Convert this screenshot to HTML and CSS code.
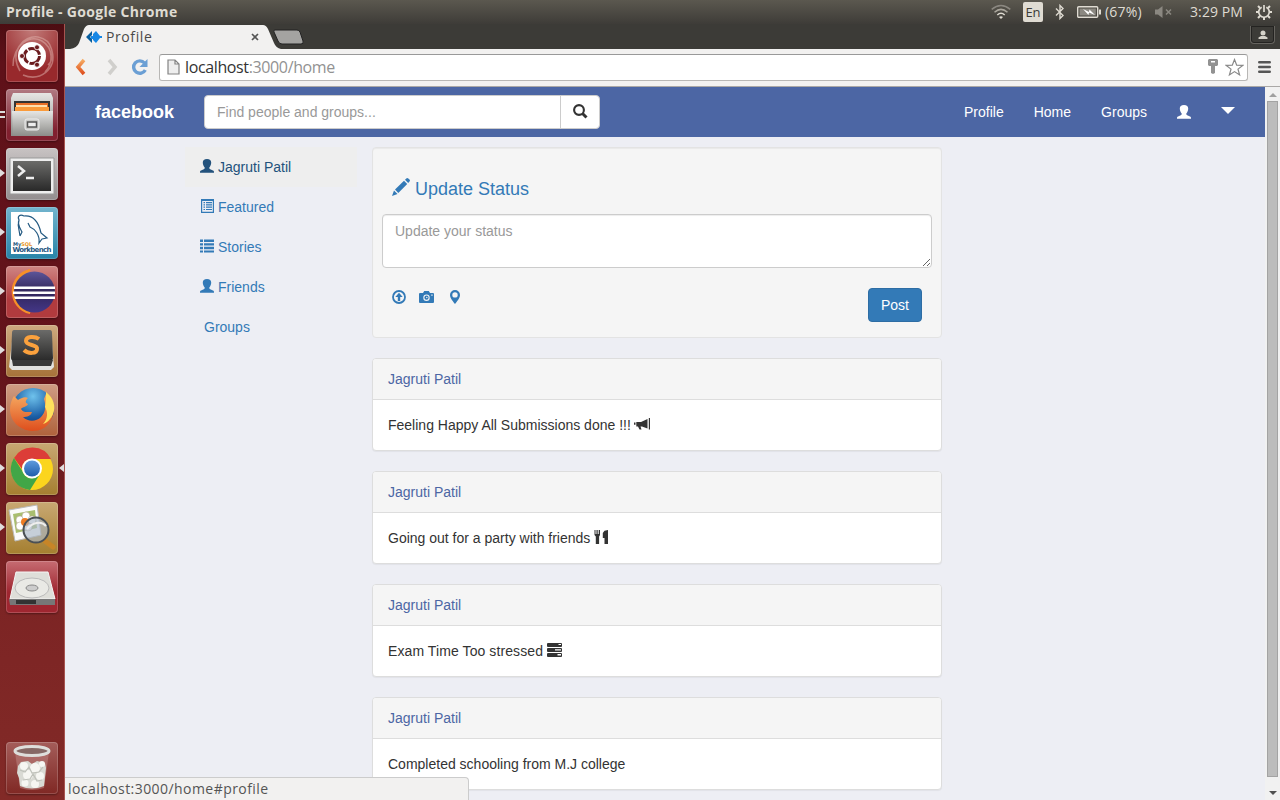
FILE: index.html
```html
<!DOCTYPE html>
<html lang="en">
<head>
<meta charset="utf-8">
<title>Profile</title>
<link rel="stylesheet" href="styles.css">
</head>
<body>
<svg class="defs" width="0" height="0">
  <defs>
    <linearGradient id="metal" x1="0" y1="0" x2="0" y2="1"><stop offset="0" stop-color="#e6e6e4"/><stop offset="1" stop-color="#8c8c89"/></linearGradient>
    <linearGradient id="dark" x1="0" y1="0" x2="0" y2="1"><stop offset="0" stop-color="#6b6b69"/><stop offset="1" stop-color="#292929"/></linearGradient>
    <linearGradient id="orange" x1="0" y1="0" x2="0" y2="1"><stop offset="0" stop-color="#f6ab62"/><stop offset="1" stop-color="#de4e1d"/></linearGradient>
    <linearGradient id="indigo" x1="0" y1="0" x2="0" y2="1"><stop offset="0" stop-color="#5c5599"/><stop offset=".5" stop-color="#302559"/><stop offset="1" stop-color="#443788"/></linearGradient>
    <radialGradient id="globe" cx=".5" cy=".2" r=".8"><stop offset="0" stop-color="#6fc2ec"/><stop offset=".6" stop-color="#1b5ea5"/><stop offset="1" stop-color="#102c63"/></radialGradient>
    <linearGradient id="blue" x1="0" y1="0" x2="0" y2="1"><stop offset="0" stop-color="#5f9bdd"/><stop offset="1" stop-color="#1f5dab"/></linearGradient>
    <symbol id="user" viewBox="0 0 14 14"><path d="M7 0C4.200 0 2.800 1.200 2.800 3.600c0 2.200.8 3.700 1.900 4.800v.7c0 .6-.3.900-.9 1.200L1 11.500C.2 11.900 0 12.300 0 13v.8h14V13c0-.7-.2-1.100-1-1.500l-2.800-1.200c-.6-.3-.9-.6-.9-1.200v-.7c1.100-1.100 1.900-2.600 1.900-4.800C11.200 1.200 9.800 0 7 0z"/></symbol>
  </defs>
</svg>
<div class="desktop">
  <header class="topbar">
    <span class="window-title">Profile - Google Chrome</span>
    <div class="indicators">
      <svg class="wifi" width="20" height="16" viewBox="0 0 20 16" fill="none" stroke-width="1.500"><path stroke="#8b8881" d="M.7 5.300Q10-2.200 19.300 5.300"/><path stroke="#aaa69d" d="M3.500 8.200Q10 2.500 16.500 8.200"/><path stroke="#dfdbd2" d="M6.300 11Q10 7.600 13.700 11"/><path fill="#dfdbd2" d="M8 13Q10 11.500 12 13L10 15z"/></svg>
      <span class="lang">En</span>
      <svg class="bt" width="10" height="16" viewBox="0 0 10 16" fill="none" stroke="#dfdbd2" stroke-width="1.400"><path d="M1 4.500l7 7L5 14.500v-13l3 3-7 7"/></svg>
      <svg class="battery" width="24" height="12" viewBox="0 0 24 12"><rect x=".7" y=".7" width="20" height="10.600" rx="1" fill="none" stroke="#dfdbd2" stroke-width="1.400"/><path fill="#dfdbd2" d="M22 3.500h2v5h-2z"/><path fill="#8b8881" d="M2.500 2.500h16.300v7H2.500z"/><path fill="#fff" d="M6 3l6 3 .5-2.500L18 9l-6-2.500-.5 2.500z"/></svg>
      <span class="percent">(67%)</span>
      <svg class="sound" width="18" height="12" viewBox="0 0 18 12" fill="#8b8881"><path d="M0 3.500h3L7.500 0v12L3 8.500H0z"/><path d="M11 3.500l5 5m0-5l-5 5" stroke="#8b8881" stroke-width="1.500"/></svg>
      <span class="clock">3:29 PM</span>
      <svg class="gear" width="16" height="16" viewBox="0 0 16 16" fill="none" stroke="#dfdbd2"><path stroke-width="1.700" d="M5.700 3.200a5.300 5.300 0 1 0 4.600 0M8 1v7"/><path stroke-width="2" d="M0 8h3m10 0h3M8 13v3M2 2l2 2M14 2l-2 2M2 14l2-2M14 14l-2-2"/></svg>
    </div>
  </header>
  <div class="workspace">
    <nav class="launcher">
      <div class="tile t-dash"><svg viewBox="0 0 52 52"><g fill="none" stroke="#e2b5b0" opacity=".5" stroke-width="1.500"><path d="M7 36C7 15 24 4 36 11c12 7 11 23 3 31M14 41C3 22 17 5 32 7c16 3 17 21 10 28M17 45c17 7 34-6 29-24"/></g><circle cx="26" cy="26" r="14" fill="#fff"/><circle cx="26" cy="26" r="7.500" fill="none" stroke="#6b1b1e" stroke-width="3" stroke-dasharray="14.200 1.500"/><g fill="#6b1b1e" stroke="#fff" stroke-width=".8"><circle cx="16" cy="26" r="2.500"/><circle cx="31" cy="17.300" r="2.500"/><circle cx="31" cy="34.700" r="2.500"/></g></svg></div>
      <div class="tile t-files"><svg viewBox="0 0 52 52"><path d="M7 4h38l2 5v38H5V9z" fill="url(#metal)"/><path d="M8 12h36v12H8z" fill="#343433"/><path d="M10 14h32v9H10z" fill="#e96f26"/><path d="M10 16h31v5H10z" fill="#ffe0ae"/><path d="M9 18h34v4H9z" fill="#fa9b3b"/><path d="M6 22h41l-1 25H7z" fill="url(#metal)"/><rect x="19" y="30" width="14" height="11" rx="2" fill="#c9c9c7" stroke="#eee"/><path d="M21.500 33h9v5h-9z" fill="#eee" stroke="#555" stroke-width="1.500"/></svg><i class="pip"></i><i class="pip pip-low"></i></div>
      <div class="tile t-term"><svg viewBox="0 0 52 52"><path d="M4 10h44v36H4z" fill="#eee" stroke="#999"/><path d="M7 13h38v30H7z" fill="url(#dark)"/><path d="M12 18l6 5-6 5M20 30h8" fill="none" stroke="#eee" stroke-width="2.500"/></svg><i class="arrow"></i></div>
      <div class="tile t-mysql"><svg viewBox="0 0 52 52"><rect x="5" y="5" width="42" height="42" fill="#fff"/><path d="M14 29l2-4c-2-4-5-8-3-12-2-4 1-6 5-4 10-1 15 8 17 17l6 5-5 1-3 4c1-8-4-14-9-16l-2-4M14 29l-1-6c-1-4-1-7 0-10" fill="none" stroke="#245a82" stroke-width="1.200"/><text x="7" y="39" class="mini">My<tspan fill="#e99725">SQL</tspan></text><text x="6.500" y="45" class="mini wb" textLength="39">Workbench</text></svg><i class="arrow"></i></div>
      <div class="tile t-eclipse"><svg viewBox="0 0 52 52"><path d="M24 4a22 22 0 0 0 0 43A25 25 0 0 1 24 4" fill="#f79028" stroke="#f79028" stroke-width="2"/><circle cx="28.500" cy="26" r="20.500" fill="url(#indigo)"/><path d="M8 20.500h41v2.500H8zm-1 5h42v2.500H7zm1 5h41V33H9z" fill="#fff"/></svg><i class="arrow"></i></div>
      <div class="tile t-sublime"><svg viewBox="0 0 52 52"><path d="M7 8h38l3 34-3 3H6l-3-3z" fill="#e2e2df"/><path d="M8 5h36q2 0 2 3l1 25q0 3-3 3H9q-4 0-4-3L6 8q0-3 2-3" fill="url(#dark)"/><path d="M6 35h41l-2 6H7z" fill="#393938"/><path d="M33 14c-4-3-13-3-13 2s12 3 11 8c0 5-9 5-13 1" fill="none" stroke="#fba13d" stroke-width="4"/></svg><i class="arrow"></i></div>
      <div class="tile t-firefox"><svg viewBox="0 0 52 52"><circle cx="27" cy="25" r="21" fill="url(#globe)"/><path d="M40 10c8 7 9 17 6 24-4 10-12 13-20 13C13 46 4 37 4 25c0-5 2-10 4-13l4 4c3-2 7-4 10-2-3 3-3 5 0 6-1 3-6 3-7 5 2 4 6 3 11 3-1 4-5 5-9 5 5 5 13 5 18 0 5-5 5-12 3-18z" fill="url(#orange)"/><path d="M40 8c8 6 10 15 7 22-2 5-6 9-10 10 5-5 5-12 2-17 1-5 1-9 1-15" fill="#ffe05c"/></svg><i class="arrow"></i></div>
      <div class="tile t-chrome"><svg viewBox="0 0 52 52"><circle cx="26" cy="26" r="21" fill="#fbd51d"/><path d="M8 15a21 21 0 0 1 37 1H26c-6 0-10 4-10 10z" fill="#dc3d38"/><path d="M8 15a21 21 0 0 0 16 32l10-16c-5 7-15 5-17-2z" fill="#41a647"/><circle cx="26" cy="25.500" r="10" fill="#fff"/><circle cx="26" cy="25.500" r="8" fill="url(#blue)"/></svg><i class="arrow"></i><i class="arrow arrow-active"></i></div>
      <div class="tile t-image"><svg viewBox="0 0 52 52"><path d="M3 8l28-5 4 30-26 6z" fill="#fafafa" stroke="#bbb"/><path d="M7 12l22-4 2 18-21 5z" fill="#a9be70"/><g fill="#fff" stroke="#aa9985" stroke-width=".5"><circle cx="14" cy="18" r="4"/><circle cx="20" cy="14" r="4"/><circle cx="26" cy="18" r="4"/><circle cx="22" cy="25" r="4"/><circle cx="14" cy="24" r="4"/></g><circle cx="19" cy="20" r="4" fill="#ed7b22"/><path d="M39 39l8 6" stroke="#c78527" stroke-width="5" stroke-linecap="round"/><circle cx="30" cy="28" r="12.500" fill="#abb9c7" fill-opacity=".65" stroke="#4a5055" stroke-width="2"/><path d="M21 27c5-6 14-9 19-3" fill="none" stroke="#eee" stroke-width="2"/></svg><i class="arrow"></i></div>
      <div class="tile t-disk"><svg viewBox="0 0 52 52"><path d="M10 11h32l7 27H4z" fill="#deded9" stroke="#f5f5f5"/><ellipse cx="26" cy="27" rx="17" ry="10" fill="#e9e9e5" stroke="#bbb"/><ellipse cx="26" cy="27" rx="6" ry="3" fill="#ccc" stroke="#888"/><path d="M3 38h46v6H4z" fill="#777"/><path d="M10 39h20v4H10z" fill="#333"/></svg></div>
      <div class="tile t-trash"><svg viewBox="0 0 52 52"><path d="M9 10h34l-5 36q-12 4-24 0z" fill="#bd8582" opacity=".55"/><path d="M12 24l3-4 7-1 4 3 5-3 8 2 1 5-1 9-1 9q-12 5-24 0l-1-8-2-5z" fill="#d9dad4"/><g fill="#f6f6f2"><circle cx="18" cy="24" r="4"/><circle cx="29" cy="26" r="5"/><circle cx="36" cy="22" r="3"/><circle cx="22" cy="33" r="5"/><circle cx="34" cy="34" r="4"/><circle cx="19" cy="41" r="3.500"/><circle cx="29" cy="42" r="4"/></g><path d="M14 28l5 2 4-5 3 6 7-1 4-5M17 38l7-1 3-5 4 7 5-1" fill="none" stroke="#bfc1ba" stroke-width="1.200"/><ellipse cx="26" cy="9" rx="17" ry="4.500" fill="#866865" stroke="#dededb" stroke-width="3"/></svg></div>
    </nav>
    <section class="browser">
      <div class="tabstrip">
        <svg class="tab-shape" width="260" height="25" viewBox="0 0 260 25"><path d="M0 25Q7 24 9 19L14 5Q16 1 19 1H193Q196 1 198 5L204 19Q206 24 211 25z" fill="#f2f1f0"/><path d="M205 6H227Q229 6 230 8L233 17Q234 20 231 20H212Q209 20 208 17L204 8Q203 6 205 6" fill="#a4a3a1" stroke="#222"/></svg>
        <div class="tab-content">
          <svg width="16" height="12" viewBox="0 0 16 12"><path d="M6 0v4L4 6l2 2v4L0 6z" fill="#075e9e"/><path d="M7 3l3-3 4 5h2v2h-2l-4 5-3-3V8H5V5h2z" fill="#1687e5"/></svg>
          <span class="tab-title">Profile</span>
          <svg class="close" width="8" height="8" viewBox="0 0 8 8"><path d="M1 1l6 6m0-6L1 7" stroke="#555" stroke-width="1.700"/></svg>
        </div>
        <div class="profile-btn"><svg width="10" height="10" viewBox="0 0 10 10" fill="#d5d2c9"><circle cx="5" cy="3" r="2.500"/><path d="M.5 9V7.500L3 6h4l2.500 1.500V9z"/></svg></div>
      </div>
      <div class="toolbar">
        <svg class="back" width="12" height="18" viewBox="0 0 12 18"><path d="M9 2L3 9l6 7" fill="none" stroke="url(#orange)" stroke-width="3.500"/></svg>
        <svg class="fwd" width="12" height="18" viewBox="0 0 12 18"><path d="M3 2l6 7-6 7" fill="none" stroke="#d0cfcc" stroke-width="3.500"/></svg>
        <svg class="reload" width="18" height="18" viewBox="0 0 18 18"><path d="M14.300 12a6.200 6.200 0 1 1-.8-7" fill="none" stroke="#6b9fd4" stroke-width="3.400"/><path d="M16.500 1v8h-8z" fill="#6b9fd4"/></svg>
        <div class="omnibox">
          <svg width="13" height="16" viewBox="0 0 13 16"><path d="M1 1h7l4 4v10H1zM8 1v4h4" fill="#eee" stroke="#838383" stroke-width="1.200"/></svg>
          <span class="url">localhost<span class="path">:3000/home</span></span>
          <svg class="key" width="10" height="16" viewBox="0 0 10 16"><path fill="#929292" fill-rule="evenodd" d="M1 0h8l1 1v5L9 7H7v7l-2 1-2-1V7H1L0 6V1zm2 2v1.500h4V2z"/></svg>
          <svg class="star" width="19" height="19" viewBox="0 0 19 19"><path d="M9.500 1.500l2.200 5.600 6 .3-4.700 3.700 1.600 5.800-5.100-3.300-5.100 3.300L6 11.100 1.300 7.400l6-.3z" fill="#fff" stroke="#888" stroke-width="1.200"/></svg>
        </div>
        <svg class="menu" width="13" height="14" viewBox="0 0 13 14"><path d="M1.300 2.300h10.400M1.300 7h10.400M1.300 11.700h10.400" stroke="#555" stroke-width="2.600" stroke-linecap="round"/></svg>
      </div>
      <div class="viewport">
        <div class="page">
          <header class="navbar">
            <a class="brand">facebook</a>
            <div class="search"><span class="search-input">Find people and groups...</span><span class="search-btn"><svg width="15" height="15" viewBox="0 0 15 15" fill="none" stroke="#333"><circle cx="6" cy="6" r="4.900" stroke-width="2.100"/><path d="M9.500 9.500l4 4" stroke-width="3"/></svg></span></div>
            <div class="nav-links"><a>Profile</a><a>Home</a><a>Groups</a><a><svg class="icon nav-user"><use href="#user"/></svg></a><a class="caret-link"><i class="caret"></i></a></div>
          </header>
          <div class="columns">
            <nav class="sidebar">
              <a class="active"><svg class="icon"><use href="#user"/></svg>Jagruti Patil</a>
              <a><svg class="icon" viewBox="0 0 14 14"><path d="M1.600.6h11.800v12.800H1.600z" fill="none" stroke="currentColor" stroke-width="1.200"/><path d="M3.500 3H5v1.200H3.500zM6 3h6v1.200H6zM3.500 5.300H5v1.200H3.500zm2.500 0h6v1.200H6zM3.500 7.600H5v1.200H3.500zm2.500 0h6v1.200H6zM3.500 9.900H5v1.200H3.500zm2.500 0h6v1.200H6z"/><path d="M1 0h13v2H1z"/></svg>Featured</a>
              <a><svg class="icon" viewBox="0 0 14 14"><path d="M0 .6h3v2.400H0zm4 0h10v2.400H4zM0 4.200h3v2.400H0zm4 0h10v2.400H4zM0 7.800h3v2.400H0zm4 0h10v2.400H4zM0 11.400h3v2.200H0zm4 0h10v2.200H4z"/></svg>Stories</a>
              <a><svg class="icon"><use href="#user"/></svg>Friends</a>
              <a class="plain">Groups</a>
            </nav>
            <main class="feed">
              <section class="composer">
                <h4><svg width="20" height="20" viewBox="0 0 20 20" fill="#337ab7"><path d="M1 19l2-5.500L6.500 17zM4 12.500L13 3.700l3.200 3.200L7.300 16zM14 2.700l1.300-1.300q1-1 2 0l1.200 1.200q1 1 0 2L17.200 5.900z"/></svg><span>Update Status</span></h4>
                <textarea placeholder="Update your status"></textarea>
                <div class="actions">
                  <svg class="icon" viewBox="0 0 14 14"><circle cx="7" cy="7" r="6" fill="none" stroke="currentColor" stroke-width="1.800"/><path d="M7 2.800l3.700 4.200H8.200v4H5.800V7H3.300z"/></svg>
                  <svg class="camera" viewBox="0 0 15 14"><path fill-rule="evenodd" d="M1 3h3l1.200-2h4.600L11 3h3q1 0 1 1v8q0 1-1 1H1q-1 0-1-1V4q0-1 1-1zm6.500 1.500a3.200 3.200 0 1 0 0 6.400 3.200 3.200 0 0 0 0-6.400zM12.300 4.500v1.200h1.300V4.500z"/><circle cx="7.500" cy="7.700" r="2.100"/><circle cx="7.800" cy="7.500" r=".7" fill="#f5f5f5"/></svg>
                  <svg class="icon" viewBox="0 0 14 14"><path fill-rule="evenodd" d="M7 0a5 5 0 0 0-5 5c0 3 3.500 7 5 9 1.500-2 5-6 5-9a5 5 0 0 0-5-5zm0 2.200a2.700 2.700 0 1 1 0 5.400 2.700 2.700 0 0 1 0-5.400z"/></svg>
                  <button>Post</button>
                </div>
              </section>
              <article class="post"><h5>Jagruti Patil</h5><p>Feeling Happy All Submissions done !!!<svg class="post-icon tight" viewBox="0 0 16 14"><path d="M14.800 1H16v11.500h-1.200zM13.500 2v9.500L8 9.600H6.500l1 2.900h-2L4 9.400H2.300V5H7zM0 5.500h1.500v2.200H0z"/></svg></p></article>
              <article class="post"><h5>Jagruti Patil</h5><p>Going out for a party with friends <svg class="post-icon" viewBox="0 0 14 14"><path d="M0 0h1v4h1V0h1.200v4h1V0h1.300v5L4.600 6.500V14H1.300V6.500L0 5zM10 .8L13.500 0v14H10V8H8.300V3z"/></svg></p></article>
              <article class="post"><h5>Jagruti Patil</h5><p class="exam">Exam Time Too stressed <svg class="post-icon" viewBox="0 0 15 14"><path fill-rule="evenodd" d="M.5 0h14l.5 1v2l-.5 1H.5L0 3V1zm11 1v1H14V1zM.5 5h14l.5 1v2l-.5 1H.5L0 8V6zM8 6.300v1.200h6V6.300zM.5 10h14l.5 1v2l-.5 1H.5L0 13v-2zm10 1v1.500H14V11z"/></svg></p></article>
              <article class="post"><h5>Jagruti Patil</h5><p>Completed schooling from M.J college</p></article>
            </main>
          </div>
        </div>
        <div class="scrollbar"><i class="up"></i><div class="thumb"></div><i class="down"></i></div>
        <div class="status">localhost:3000/home#profile</div>
      </div>
    </section>
  </div>
</div>
</body>
</html>
```
FILE: styles.css
```css
* { box-sizing: border-box; }
body { margin: 0; overflow: hidden; font: 14px/20px "Liberation Sans", Arial, sans-serif; color: #333; }
svg { display: block; flex: none; }
.defs { position: absolute; }
.desktop { width: 1280px; height: 800px; display: flex; flex-direction: column; overflow: hidden; }
.topbar { height: 24px; flex: none; display: flex; justify-content: space-between; align-items: center; padding: 0 8px 0 6px; background: linear-gradient(#5b584f, #3e3c38); color: #dfdbd2; font: 14px/24px "Open Sans", "Noto Sans", sans-serif; }
.window-title { font-weight: 700; letter-spacing: .3px; }
.indicators { display: flex; align-items: center; }
.lang { margin-left: 12px; width: 20px; height: 20px; border-radius: 2px; background: #dfdbd2; color: #3c3b37; text-align: center; line-height: 20px; font-size: 13px; }
.bt { margin-left: 12px; }
.battery { margin-left: 12px; }
.percent { width: 38px; margin-left: 4px; letter-spacing: .2px; white-space: nowrap; }
.sound { margin-left: 12px; }
.clock { width: 53px; margin-left: 17px; letter-spacing: .1px; white-space: nowrap; }
.gear { margin-left: 13px; }
.workspace { flex: 1; min-height: 0; display: flex; }
.launcher { width: 65px; flex: none; padding: 6px 0 6px 6px; display: flex; flex-direction: column; gap: 7px; background: linear-gradient(#4c0d12, #5f1119 5%, #64141b 45%, #7c2424 73%, #822a27); border-right: 1px solid #a75450; }
.tile { position: relative; width: 52px; height: 52px; flex: none; border-radius: 4px; box-shadow: inset 0 0 0 1px rgba(255,255,255,.18), 0 1px 2px rgba(0,0,0,.35); }
.tile svg { width: 52px; height: 52px; }
.t-dash { background: radial-gradient(circle at 50% 0, #c27b79, #98292c 70%); }
.t-files { background: linear-gradient(#b17a82, #81202f 80%); }
.t-term { background: linear-gradient(#c8c3c3, #938e8f); }
.t-mysql { background: linear-gradient(#73b5ce, #2783a7); }
.t-eclipse { background: linear-gradient(#cf8583, #b13b3e 65%); }
.t-sublime { background: linear-gradient(#ceaa80, #a67239); }
.t-firefox { background: linear-gradient(#cf9d84, #b0623c); }
.t-chrome, .t-image { background: linear-gradient(#c8a873, #a57f30); }
.t-disk { background: linear-gradient(#c66c72, #9f2630 60%); }
.t-trash { margin-top: auto; background: linear-gradient(#a45d5a, #802824); }
.mini { font: bold 5px "DejaVu Sans", sans-serif; fill: #1e5680; }
.wb { font-size: 7px; }
.arrow { position: absolute; left: -6px; top: 21px; border: solid transparent; border-width: 4px 0 4px 5px; border-left-color: #e0dddd; }
.arrow-active { left: auto; right: -6px; border-width: 4px 5px 4px 0; border-right-color: #e0dddd; }
.pip { position: absolute; left: -6px; top: 22px; width: 5px; height: 2px; background: #ddd; }
.pip-low { top: 27px; }
.browser { flex: 1; min-width: 0; display: flex; flex-direction: column; font-family: "Open Sans", "Noto Sans", sans-serif; }
.tabstrip { height: 25px; flex: none; display: flex; justify-content: space-between; background: #3c3b37; position: relative; }
.tab-shape { position: absolute; left: 5px; top: 0; }
.tab-content { position: relative; width: 194px; padding-left: 21px; display: flex; align-items: center; font-size: 14px; color: #4a4a49; }
.tab-title { margin-left: 4px; letter-spacing: .6px; }
.close { margin-left: auto; }
.profile-btn { width: 25px; height: 18px; margin: 2px 5px 0 0; border: 1px solid #65635e; border-top: 0; border-radius: 0 0 4px 4px; display: flex; justify-content: center; align-items: center; box-shadow: inset 0 0 0 1px #242321; }
.toolbar { height: 38px; flex: none; display: flex; align-items: center; padding: 0 9px 1px 10px; background: #f2f1f0; border-bottom: 1px solid #aaa8a6; }
.fwd { margin-left: 19px; }
.reload { margin-left: 13px; }
.omnibox { width: 1089px; height: 27px; margin: 0 10px; padding: 0 3px 0 7px; border: 1px solid #b8b7b5; border-top: 1px solid #999; border-radius: 3px; display: flex; align-items: center; background: #fff; }
.url { margin-left: 5px; font-size: 16px; color: #333; letter-spacing: -.37px; }
.path { color: #929292; }
.key { margin-left: auto; margin-right: 7px; }
.viewport { flex: 1; min-height: 0; display: flex; position: relative; }
.page { width: 1200px; height: 713px; overflow: hidden; background: #edeef4; font: 14px/20px "Liberation Sans", Arial, sans-serif; }
.navbar { height: 50px; display: flex; align-items: center; padding: 0 30px; background: #4c66a4; color: #fff; }
.brand { width: 109px; font-size: 18px; font-weight: 700; }
.search { width: 396px; height: 34px; display: flex; background: #fff; border: 1px solid #ccc; border-radius: 4px; }
.search-input { width: 355px; padding: 6px 12px; color: #999; }
.search-btn { flex: 1; border-left: 1px solid #ccc; display: flex; justify-content: center; align-items: center; }
.search-btn svg { margin-top: -2px; }
.nav-links { margin-left: auto; display: flex; align-items: center; gap: 30px; }
.icon { width: 14px; height: 14px; fill: currentColor; }
.nav-user { margin-top: -1px; }
.caret { display: block; border: solid transparent; border-width: 7px 7px 0; border-top-color: #fff; margin-top: -3px; }
.columns { display: flex; align-items: flex-start; gap: 15px; padding: 10px 0 0 120px; }
.sidebar { width: 172px; flex: none; }
.sidebar a { height: 40px; padding: 10px 15px; display: flex; align-items: flex-start; gap: 4px; color: #337ab7; }
.sidebar .icon { margin-top: 2px; }
.sidebar .active { background: #eee; color: #23527c; }
.sidebar .plain { padding-left: 19px; }
.feed { width: 570px; }
.composer { height: 191px; padding: 30px 9px 0; background: #f5f5f5; border: 1px solid #e3e3e3; border-radius: 4px; box-shadow: inset 0 1px 1px rgba(0,0,0,.05); margin-bottom: 20px; }
h4 { height: 20px; margin: 0 0 16px 9px; display: flex; align-items: center; gap: 4px; font-size: 18px; line-height: 20px; font-weight: 400; color: #337ab7; }
h4 svg { margin-top: -2px; }
h4 span { margin-top: 1px; }
textarea { display: block; width: 550px; height: 54px; padding: 6px 12px; border: 1px solid #ccc; border-radius: 4px; font: inherit; resize: vertical; box-shadow: inset 0 1px 1px rgba(0,0,0,.075); }
textarea::placeholder { color: #999; }
.actions { display: flex; align-items: flex-start; padding: 20px 10px 0; color: #337ab7; }
.actions svg { margin-top: 2px; margin-right: 14px; }
.actions .camera { width: 15px; height: 14px; margin-left: -1px; fill: currentColor; }
button { margin-left: auto; width: 54px; height: 34px; border: 1px solid #2e6da4; border-radius: 4px; background: #337ab7; color: #fff; font: inherit; }
.post { height: 93px; margin-bottom: 20px; border: 1px solid #ddd; border-radius: 4px; background: #fff; box-shadow: 0 1px 1px rgba(0,0,0,.05); overflow: hidden; }
h5 { height: 41px; margin: 0; padding: 10px 15px; font: inherit; color: #4c66a4; background: #f5f5f5; border-bottom: 1px solid #ddd; }
p { margin: 0; padding: 15px; }
.exam { letter-spacing: .09px; }
.post-icon { display: inline-block; width: 15px; height: 14px; fill: #333; vertical-align: -1px; }
.tight { width: 16px; margin-left: 3px; }
.scrollbar { width: 15px; background: #f1f1f1; display: flex; flex-direction: column; align-items: center; padding: 6px 0 5px; }
.up, .down { border: solid transparent; border-width: 0 4px 4px; border-bottom-color: #a0a0a0; }
.thumb { width: 11px; flex: 1; margin: 4px 0 14px; background: #bcbcbc; border: 1px solid #a3a3a3; }
.down { border-width: 4px 4px 0; border-bottom-color: transparent; border-top-color: #505050; }
.status { position: absolute; left: 0; bottom: 0; width: 404px; height: 23px; padding-left: 3px; background: #f2f1f0; border: 1px solid #ccc; border-width: 1px 1px 0 0; border-top-right-radius: 4px; color: #555; font-size: 14px; line-height: 22px; letter-spacing: .44px; }
```
